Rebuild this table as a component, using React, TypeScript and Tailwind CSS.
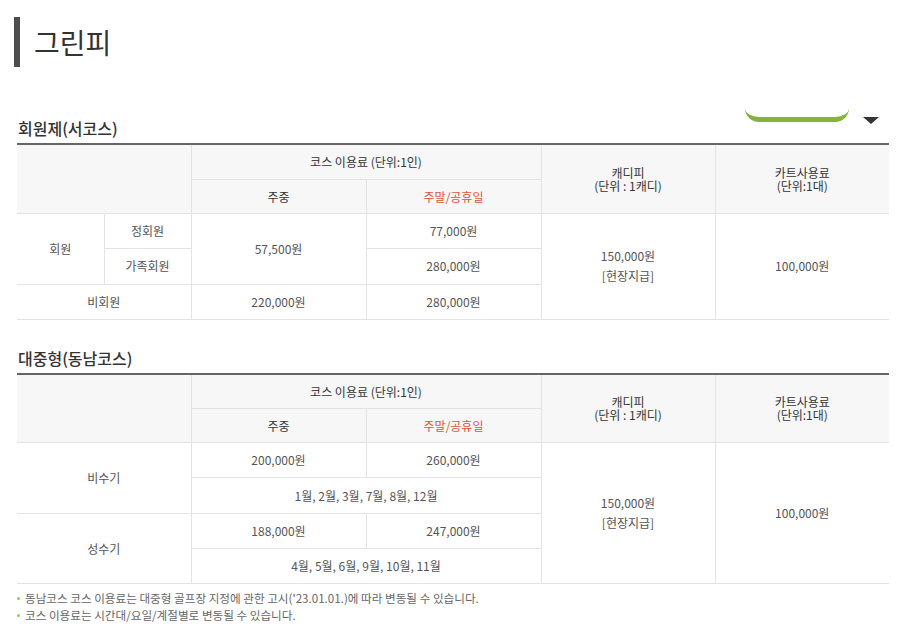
const font = { fontFamily: '"Noto Sans CJK KR", "Noto Sans", sans-serif' };

const th = "border border-[#e3e3e3] bg-[#f7f7f7] text-[#333] font-normal text-[12px] leading-[13px] text-center align-middle";
const td = "border border-[#e3e3e3] text-[#555] text-[12px] text-center align-middle";

const Cols = () => (
  <colgroup>
    <col className="w-[87px]" />
    <col className="w-[87px]" />
    <col className="w-[175px]" />
    <col className="w-[175px]" />
    <col className="w-[174px]" />
    <col className="w-[174px]" />
  </colgroup>
);

const Head = () => (
  <thead>
    <tr className="h-[35px]">
      <th colSpan={2} rowSpan={2} className={th + " border-l-0"}></th>
      <th colSpan={2} className={th}>코스 이용료 (단위:1인)</th>
      <th rowSpan={2} className={th}>
        캐디피
        <br />
        (단위 : 1캐디)
      </th>
      <th rowSpan={2} className={th + " border-r-0"}>
        카트사용료
        <br />
        (단위:1대)
      </th>
    </tr>
    <tr className="h-[34px]">
      <th className={th}>주중</th>
      <th className={th + " text-[#e8503a]"}>주말/공휴일</th>
    </tr>
  </thead>
);

const Caddie = ({ rows }: { rows: number }) => (
  <>
    <td rowSpan={rows} className={td + " leading-[20px]"}>
      150,000원
      <br />
      [현장지급]
    </td>
    <td rowSpan={rows} className={td + " border-r-0"}>100,000원</td>
  </>
);

const Section = ({ title, children }: { title: string; children: React.ReactNode }) => (
  <section>
    <h3 className="text-[16px] leading-[24px] font-medium text-[#333] pl-[1px] mb-[3px]">{title}</h3>
    <table className="w-[872px] border-collapse table-fixed border-t-2 border-t-[#666]">
      <Cols />
      <Head />
      <tbody>{children}</tbody>
    </table>
  </section>
);

const Note = ({ children }: { children: React.ReactNode }) => (
  <li className="flex items-center gap-[5px]">
    <span className="w-[3px] h-[3px] rounded-full bg-[#9cc85a] shrink-0" />
    {children}
  </li>
);

export default function App() {
  return (
    <div className="relative w-[905px] h-[627px] bg-white overflow-hidden" style={font}>
      <div className="flex items-center gap-[14px] pl-[14px] pt-[17px]">
        <div className="w-[6px] h-[50px] bg-[#4d4d4d]" />
        <h2 className="text-[28px] leading-[34px] text-[#333] font-normal">그린피</h2>
      </div>

      <div className="absolute left-[745px] top-[108px] w-[104px] h-[14px] rounded-b-[14px] border-b-[5px] border-[#86b33a] bg-white" />
      <div className="absolute left-[863px] top-[117px] w-0 h-0 border-l-[8px] border-r-[8px] border-t-[7px] border-l-transparent border-r-transparent border-t-[#333]" />

      <div className="flex flex-col gap-[26px] pl-[17px] pt-[49px]">
        <Section title="회원제(서코스)">
          <tr className="h-[35px]">
            <td rowSpan={2} className={td + " border-l-0"}>회원</td>
            <td className={td}>정회원</td>
            <td rowSpan={2} className={td}>57,500원</td>
            <td className={td}>77,000원</td>
            <Caddie rows={3} />
          </tr>
          <tr className="h-[36px]">
            <td className={td}>가족회원</td>
            <td className={td}>280,000원</td>
          </tr>
          <tr className="h-[35px]">
            <td colSpan={2} className={td + " border-l-0"}>비회원</td>
            <td className={td}>220,000원</td>
            <td className={td}>280,000원</td>
          </tr>
        </Section>

        <div>
          <Section title="대중형(동남코스)">
            <tr className="h-[35px]">
              <td colSpan={2} rowSpan={2} className={td + " border-l-0"}>비수기</td>
              <td className={td}>200,000원</td>
              <td className={td}>260,000원</td>
              <Caddie rows={4} />
            </tr>
            <tr className="h-[36px]">
              <td colSpan={2} className={td}>1월, 2월, 3월, 7월, 8월, 12월</td>
            </tr>
            <tr className="h-[35px]">
              <td colSpan={2} rowSpan={2} className={td + " border-l-0"}>성수기</td>
              <td className={td}>188,000원</td>
              <td className={td}>247,000원</td>
            </tr>
            <tr className="h-[35px]">
              <td colSpan={2} className={td}>4월, 5월, 6월, 9월, 10월, 11월</td>
            </tr>
          </Section>
          <ul className="mt-[6px] text-[11.6px] leading-[17px] text-[#666]">
            <Note>동남코스 코스 이용료는 대중형 골프장 지정에 관한 고시('23.01.01.)에 따라 변동될 수 있습니다.</Note>
            <Note>코스 이용료는 시간대/요일/계절별로 변동될 수 있습니다.</Note>
          </ul>
        </div>
      </div>
    </div>
  );
}
